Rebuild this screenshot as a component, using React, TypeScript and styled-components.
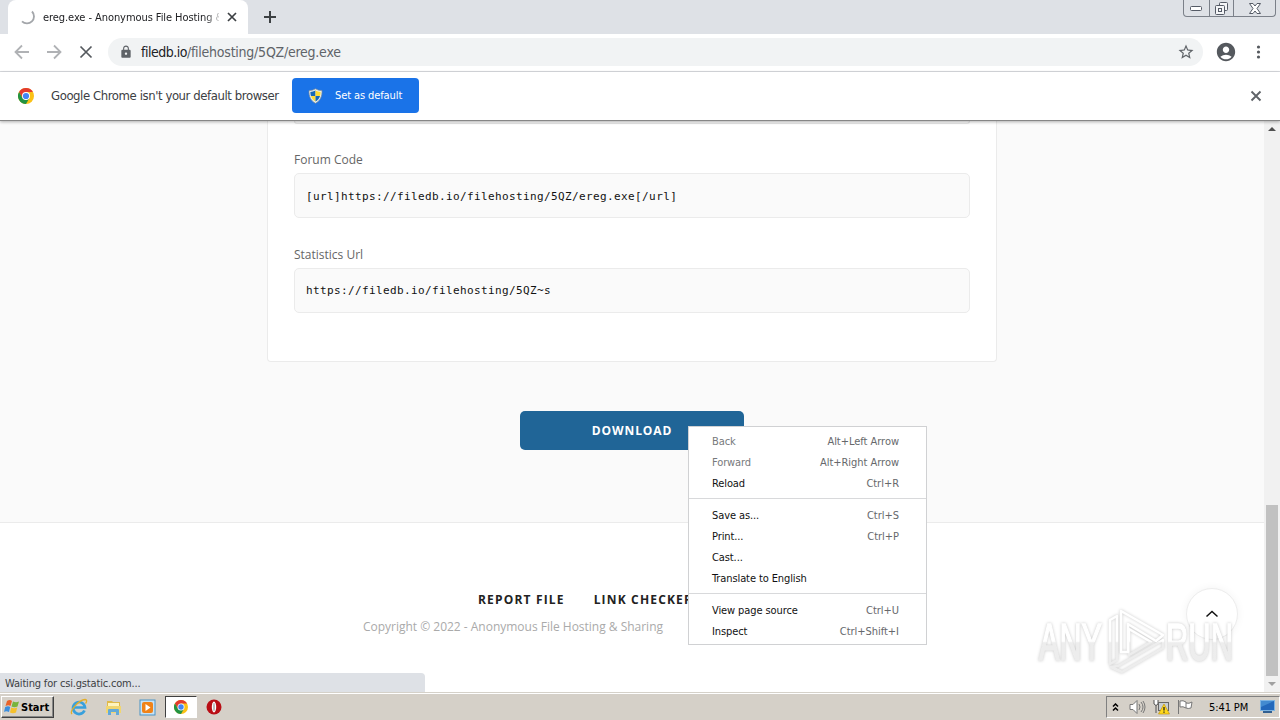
import React from 'react';
import styled, { createGlobalStyle, css } from 'styled-components';
import { MdAccountCircle, MdLock, MdStarBorder } from 'react-icons/md';

const GlobalStyle = createGlobalStyle`
  * {
    box-sizing: border-box;
  }
  body {
    margin: 0;
    overflow: hidden;
    background: #fafafa;
  }
`;

const uiFont = css`
  font-family: 'DejaVu Sans Condensed', 'DejaVu Sans', sans-serif;
  font-stretch: condensed;
`;

const Screen = styled.div`
  ${uiFont}
  position: relative;
  width: 1280px;
  height: 720px;
  display: flex;
  flex-direction: column;
  overflow: hidden;
  font-size: 11px;
  color: #202124;
`;

const Label = styled.span<{ $space?: number; $color?: string }>`
  white-space: nowrap;
  letter-spacing: ${(p) => p.$space || 0}px;
  ${(p) => p.$color && `color: ${p.$color};`}
`;

/* ---------- tab strip ---------- */

const TabStrip = styled.div`
  flex: none;
  height: 34px;
  display: flex;
  align-items: flex-start;
  padding-left: 8px;
  background: #dee1e6;
`;

const Tab = styled.div`
  width: 240px;
  height: 34px;
  display: flex;
  align-items: center;
  padding-left: 12px;
  background: #fff;
  border-radius: 8px 8px 0 0;
`;

const TabTitle = styled.div`
  width: 176px;
  margin-left: 7px;
  overflow: hidden;
  mask-image: linear-gradient(to right, #000 162px, transparent 180px);
`;

const TabClose = styled.svg`
  margin-left: 8px;
`;

const NewTab = styled.svg`
  margin: 11px 0 0 16px;
`;

const WindowButtons = styled.div`
  display: flex;
  width: 93px;
  height: 17px;
  margin: 0 4px 0 auto;
  border: 1px solid #7b8089;
  border-top: none;
  border-radius: 0 0 4px 4px;
`;

const WindowButton = styled.div<{ $width: number }>`
  width: ${(p) => p.$width}px;
  display: flex;
  align-items: center;
  justify-content: center;
  & + & {
    border-left: 1px solid #7b8089;
  }
`;

/* ---------- toolbar ---------- */

const Toolbar = styled.div`
  flex: none;
  height: 38px;
  display: flex;
  align-items: center;
  padding: 0 14px 2px;
  background: #fff;
  border-bottom: 1px solid #dadce0;
`;

const NavIcon = styled.svg`
  flex: none;
  margin-right: 16px;
`;

const Omnibox = styled.div`
  flex: none;
  width: 1095px;
  height: 28px;
  margin-left: -2px;
  display: flex;
  align-items: center;
  padding: 0 8px 0 11px;
  border-radius: 14px;
  background: #f1f3f4;
  color: #5f6368;
`;

const Url = styled.div`
  flex: 1;
  margin-left: 8px;
  font-size: 14px;
  letter-spacing: -0.24px;
  color: #606469;
  b {
    font-weight: normal;
    letter-spacing: -0.5px;
    color: #202124;
  }
`;

/* ---------- info bar ---------- */

const InfoBar = styled.div`
  flex: none;
  height: 49px;
  display: flex;
  align-items: center;
  padding: 0 18px 1px;
  background: #fff;
  position: relative;
  border-bottom: 1px solid #868686;
  box-shadow: 0 1px 3px rgba(0, 0, 0, 0.3);
`;

const InfoText = styled.div`
  width: 228px;
  margin: 0 13px 0 17px;
  font-size: 13px;
  letter-spacing: -0.42px;
  white-space: nowrap;
  color: #3c4043;
`;

const DefaultButton = styled.div`
  width: 127px;
  height: 35px;
  display: flex;
  align-items: center;
  gap: 12px;
  padding-left: 16px;
  border-radius: 4px;
  background: #1a73e8;
  color: #fff;
`;

const InfoClose = styled.svg`
  margin: 1px 0 0 auto;
`;

/* ---------- page ---------- */

const Viewport = styled.div`
  flex: 1;
  min-height: 0;
  display: flex;
`;

const Page = styled.div`
  width: 1264px;
  display: flex;
  flex-direction: column;
  align-items: center;
  overflow: hidden;
  background: #fafafa;
  font-family: 'Open Sans', sans-serif;
  font-stretch: normal;
`;

const Card = styled.div`
  flex: none;
  width: 730px;
  height: 241px;
  padding: 0 26px;
  border: 1px solid #ebebeb;
  border-top: none;
  border-radius: 0 0 4px 4px;
  background: #fff;
`;

const PreviousField = styled.div`
  height: 3px;
  border: 1px solid #e6e6e6;
  border-top: none;
  border-radius: 0 0 5px 5px;
  background: #fafafa;
`;

const FieldLabel = styled.div<{ $top: number }>`
  height: 18px;
  margin-top: ${(p) => p.$top}px;
  font-size: 12px;
  line-height: 18px;
  color: #666;
`;

const CodeField = styled.div<{ $line: number }>`
  height: 45px;
  margin-top: 4px;
  padding-left: 11px;
  border: 1px solid #ebebeb;
  border-radius: 5px;
  background: #fafafa;
  font-family: 'DejaVu Sans Mono', monospace;
  font-size: 11px;
  letter-spacing: 0.38px;
  line-height: ${(p) => p.$line}px;
  color: #111;
`;

const Download = styled.div`
  flex: none;
  width: 224px;
  height: 39px;
  margin-top: 49px;
  border-radius: 5px;
  background: #206597;
  color: #fff;
  font-size: 12px;
  font-weight: 700;
  letter-spacing: 0.9px;
  line-height: 39px;
  text-align: center;
`;

const Footer = styled.div`
  flex: none;
  width: 100%;
  height: 171px;
  margin-top: 72px;
  padding-top: 67px;
  border-top: 1px solid #ebebeb;
  background: #fff;
`;

const FooterLinks = styled.div`
  display: flex;
  gap: 29px;
  padding-left: 478px;
  font-size: 12px;
  font-weight: 700;
  letter-spacing: 1.17px;
  line-height: 20px;
  color: #222;
`;

const Copyright = styled.div`
  margin-top: 8px;
  padding-left: 363px;
  font-size: 12px;
  letter-spacing: -0.01px;
  line-height: 18px;
  color: #aaa;
`;

const Scrollbar = styled.div`
  width: 16px;
  display: flex;
  flex-direction: column;
  align-items: center;
  padding: 6px 0;
  background: #f1f1f1;
`;

const Thumb = styled.div`
  width: 12px;
  height: 171px;
  margin: auto 0 6px;
  background: #c1c1c1;
`;

const Arrow = styled.div<{ $down?: boolean }>`
  border: 4px solid transparent;
  ${(p) =>
    p.$down
      ? 'border-top-color: #a0a0a0; border-bottom: 0;'
      : 'border-bottom-color: #505050; border-top: 0;'}
`;

/* ---------- overlays ---------- */

const StatusBubble = styled.div`
  position: absolute;
  left: 0;
  bottom: 28px;
  width: 425px;
  height: 19px;
  padding-left: 5px;
  border-top-right-radius: 4px;
  background: #dee1e6;
  line-height: 21px;
  color: #3c4043;
`;

const ContextMenu = styled.div`
  position: absolute;
  left: 688px;
  top: 426px;
  width: 239px;
  height: 219px;
  padding-top: 4px;
  border: 1px solid #d0d1d3;
  background: #fff;
`;

const MenuRow = styled.div<{ $disabled?: boolean }>`
  height: 21px;
  display: flex;
  justify-content: space-between;
  padding: 0 27px 0 23px;
  line-height: 21px;
  color: ${(p) => (p.$disabled ? '#77797c' : '#111')};
`;

const MenuLine = styled.div`
  height: 1px;
  margin: 4px 0 6px;
  background: #d8d9db;
`;

const ToTop = styled.div`
  position: absolute;
  left: 1186px;
  top: 588px;
  width: 52px;
  height: 52px;
  display: flex;
  align-items: center;
  justify-content: center;
  border: 1px solid #ededed;
  border-radius: 50%;
  background: #fff;
  box-shadow: 0 0 8px rgba(0, 0, 0, 0.05);
`;

const Watermark = styled.svg`
  position: absolute;
  left: 1030px;
  top: 602px;
  filter: drop-shadow(0 0 1.5px rgba(0, 0, 0, 0.22));
`;

/* ---------- taskbar ---------- */

const Taskbar = styled.div`
  flex: none;
  height: 28px;
  display: flex;
  align-items: center;
  padding: 1px 0 0 1px;
  border-top: 1px solid #d5d1c9;
  box-shadow: inset 0 1px 0 #fff;
  background: #d5d0c8;
  color: #000;
`;

const StartButton = styled.div`
  width: 53px;
  height: 22px;
  display: flex;
  align-items: center;
  gap: 1px;
  padding-left: 2px;
  border: 1px solid;
  border-color: #fff #404040 #404040 #fff;
  box-shadow: inset -1px -1px 0 #888;
  font-size: 11px;
  font-weight: 700;
`;

const TaskIcons = styled.div`
  display: flex;
  align-items: center;
  margin-left: 8px;
`;

const TaskIcon = styled.div<{ $active?: boolean }>`
  width: ${(p) => (p.$active ? 32 : 34)}px;
  height: 22px;
  display: flex;
  align-items: center;
  justify-content: center;
  ${(p) =>
    p.$active &&
    `
    margin: 0 0 0 1px;
    border: 1px solid;
    border-color: #404040 #fff #fff #404040;
    background: #fff;
  `}
`;

const Tray = styled.div`
  width: 174px;
  height: 22px;
  display: flex;
  align-items: center;
  margin-left: auto;
  padding-left: 5px;
  border: 1px solid;
  border-color: #808080 #fff #fff #808080;
`;

const TraySvg = styled.svg<{ $left: number }>`
  flex: none;
  margin-left: ${(p) => p.$left}px;
`;

const Clock = styled.div`
  flex: none;
  width: 40px;
  margin: 0 11px 0 15px;
  font-size: 11px;
  letter-spacing: -0.1px;
  white-space: nowrap;
`;

function ChromeLogo({ size }: { size: number }) {
  return (
    <svg width={size} height={size} viewBox="0 0 16 16">
      <circle cx="8" cy="8" r="8" fill="#fbc116" />
      <path d="M8 4h6.930A8 8 0 0 0 1.070 4L4.500 10Z" fill="#e33b2e" />
      <path d="M1.070 4A8 8 0 0 0 8 16l3.460-6L8 11.500 4.500 10Z" fill="#229342" />
      <circle cx="8" cy="8" r="4" fill="#fff" />
      <circle cx="8" cy="8" r="3.100" fill="#4285f4" />
    </svg>
  );
}

function Shield() {
  return (
    <svg width="15" height="16" viewBox="0 0 15 16">
      <path
        d="M7.500.8Q10.500 2.800 14 2.500C14.300 8.500 12 13 7.500 15.300 3 13 .7 8.500 1 2.500Q4.500 2.800 7.500.8Z"
        fill="#e8eef0"
        stroke="#7b8b98"
        strokeWidth=".7"
      />
      <path d="M7.500 2.600V8H3C2.500 6.500 2.400 5.500 2.400 4Q5 4 7.500 2.600Z" fill="#1668b8" />
      <path d="M7.500 2.600V8H12c.5-1.500.6-2.500.6-4Q10 4 7.500 2.600Z" fill="#ffdc35" />
      <path d="M7.500 8v5.600C5.200 12.200 3.700 10.500 3 8Z" fill="#ffdc35" />
      <path d="M7.500 8v5.600C9.800 12.200 11.300 10.500 12 8Z" fill="#1668b8" />
    </svg>
  );
}

function BrowserTop() {
  return (
    <>
      <TabStrip>
        <Tab>
          <svg width="16" height="16" viewBox="0 0 16 16" fill="none">
            <path d="M12 2.500A7 7 0 1 1 2 12.300" stroke="#a3a6aa" strokeWidth="1.800" />
          </svg>
          <TabTitle>
            <Label $space={-0.07}>ereg.exe - Anonymous File Hosting &amp; Sharing</Label>
          </TabTitle>
          <TabClose width="10" height="10">
            <path d="m1 1 8 8M9 1 1 9" stroke="#3c4043" strokeWidth="1.700" />
          </TabClose>
        </Tab>
        <NewTab width="12" height="12">
          <path d="M6 0v12M0 6h12" stroke="#3c4043" strokeWidth="2" />
        </NewTab>
        <WindowButtons>
          <WindowButton $width={25}>
            <svg width="12" height="5">
              <rect x=".5" y=".5" width="11" height="4" rx="1" fill="#fff" stroke="#555b66" />
            </svg>
          </WindowButton>
          <WindowButton $width={25}>
            <svg width="13" height="13" fill="#f4f5f7" stroke="#555b66">
              <rect x="4.500" y=".5" width="8" height="8" rx="1" />
              <rect x=".5" y="3.500" width="9" height="9" rx="1" />
              <rect x="3.500" y="6.500" width="3" height="3" />
            </svg>
          </WindowButton>
          <WindowButton $width={42}>
            <svg width="12" height="11">
              <path
                d="M.5.500h3.500L6 3 8 .500h3.500L8 5.500l3.500 5H8L6 8l-2 2.500H.5l3.500-5Z"
                fill="#fff"
                stroke="#555b66"
              />
            </svg>
          </WindowButton>
        </WindowButtons>
      </TabStrip>
      <Toolbar>
        <NavIcon width="16" height="16" fill="none" stroke="#b0b2b5" strokeWidth="1.800">
          <path d="M15 8H2M8 1.500 1.500 8 8 14.500" />
        </NavIcon>
        <NavIcon width="16" height="16" fill="none" stroke="#b0b2b5" strokeWidth="1.800">
          <path d="M1 8h13M8 1.500 14.500 8 8 14.500" />
        </NavIcon>
        <NavIcon width="16" height="16" fill="none" stroke="#55595e" strokeWidth="1.700">
          <path d="m2.500 2.500 11 11M13.500 2.500l-11 11" />
        </NavIcon>
        <Omnibox>
          <MdLock size={14} />
          <Url>
            <b>filedb.io</b>/filehosting/5QZ/ereg.exe
          </Url>
          <MdStarBorder size={18} />
        </Omnibox>
        <svg width="63" height="22" viewBox="0 0 63 22">
          <g transform="translate(12 0)" color="#55595e">
            <MdAccountCircle size={22} />
          </g>
          <g fill="#55595e">
            <circle cx="55.500" cy="6" r="1.600" />
            <circle cx="55.500" cy="11" r="1.600" />
            <circle cx="55.500" cy="16" r="1.600" />
          </g>
        </svg>
      </Toolbar>
      <InfoBar>
        <ChromeLogo size={16} />
        <InfoText>Google Chrome isn't your default browser</InfoText>
        <DefaultButton>
          <Shield />
          <Label $space={-0.1}>Set as default</Label>
        </DefaultButton>
        <InfoClose width="12" height="12">
          <path d="m1.500 1.500 9 9M10.500 1.500l-9 9" stroke="#5f6368" strokeWidth="1.900" />
        </InfoClose>
      </InfoBar>
    </>
  );
}

const menu = [
  [
    { name: 'Back', keys: 'Alt+Left Arrow', disabled: true },
    { name: 'Forward', keys: 'Alt+Right Arrow', disabled: true },
    { name: 'Reload', keys: 'Ctrl+R' },
  ],
  [
    { name: 'Save as...', keys: 'Ctrl+S' },
    { name: 'Print...', keys: 'Ctrl+P' },
    { name: 'Cast...', keys: '' },
    { name: 'Translate to English', keys: '' },
  ],
  [
    { name: 'View page source', keys: 'Ctrl+U' },
    { name: 'Inspect', keys: 'Ctrl+Shift+I' },
  ],
];

function PageMenu() {
  return (
    <ContextMenu>
      {menu.map((group, i) => (
        <React.Fragment key={i}>
          {i > 0 && <MenuLine />}
          {group.map((item) => (
            <MenuRow key={item.name} $disabled={'disabled' in item}>
              <Label $space={-0.1}>{item.name}</Label>
              <Label $space={-0.03} $color="#66686b">
                {item.keys}
              </Label>
            </MenuRow>
          ))}
        </React.Fragment>
      ))}
    </ContextMenu>
  );
}

function AnyRun() {
  return (
    <Watermark width="230" height="80" viewBox="0 0 230 80">
      <defs>
        <linearGradient id="fade" gradientUnits="userSpaceOnUse" x1="0" y1="20" x2="0" y2="60">
          <stop offset=".48" stopColor="#fff" />
          <stop offset=".52" stopColor="#ededed" />
        </linearGradient>
      </defs>
      <g
        fill="url(#fade)"
        stroke="url(#fade)"
        fontFamily="Liberation Sans, sans-serif"
        fontSize="52"
        strokeWidth="1.500"
      >
        <text x="9" y="58" textLength="63" lengthAdjust="spacingAndGlyphs">
          ANY
        </text>
        <text x="136" y="58" textLength="67" lengthAdjust="spacingAndGlyphs">
          RUN
        </text>
      </g>
      <g fill="none" stroke="url(#fade)" strokeWidth="2.500" strokeLinejoin="round">
        <path d="M87 14 80 18v44l7-4Z" />
        <path d="m133 38-45 26-7 1 11 5 41-24Z" />
        <path d="M99 27v26l22-13Z" />
        <path d="M91 50V9l42 24-7 6-28-17v28Z" stroke="#fff" />
      </g>
    </Watermark>
  );
}

function WindowsTaskbar() {
  return (
    <Taskbar>
      <StartButton>
        <svg width="16" height="16" viewBox="0 0 16 16">
          <path d="M3 2q3-2 5 0L6.500 7q-2-1.500-5 0Z" fill="#e9632a" />
          <path d="M9 2.500q3 1.500 6 0L13.500 7.500q-3 1.500-6 0Z" fill="#78b43c" />
          <path d="M1.200 8q3-1.500 5 0L5 13q-3-1.500-5 0Z" fill="#3b8ede" />
          <path d="M7.200 8.500q3 1.500 6 0L12 13.500q-3 1.500-6 0Z" fill="#f5c02c" />
        </svg>
        <Label>Start</Label>
      </StartButton>
      <TaskIcons>
        <TaskIcon>
          <svg width="18" height="18" viewBox="0 0 18 18" fill="none">
            <path d="M14.500 12.500A6 6 0 1 1 15 9.500H4" stroke="#38a0dc" strokeWidth="2.700" />
            <path d="M2 16C-1 13 9 2 15 1.500c3 0 1 3.500.5 4" stroke="#e3ae28" strokeWidth="1.300" />
          </svg>
        </TaskIcon>
        <TaskIcon>
          <svg width="17" height="17" viewBox="0 0 17 17">
            <path d="M2 2h5l1 1h7v9H2Z" fill="#e0b94a" />
            <path d="M3 4h11v5H3Z" fill="#fff4bd" />
            <path d="M1 7h15v7H1Z" fill="#f1d670" />
            <path d="M3 16v-5q0-1 1-1h9q1 0 1 1v5h-3v-3H6v3Z" fill="#62a9d8" />
          </svg>
        </TaskIcon>
        <TaskIcon>
          <svg width="17" height="17" viewBox="0 0 17 17">
            <rect x="1" y="1" width="15" height="15" fill="#c8e3f5" stroke="#4a93c5" />
            <rect x="3" y="3" width="11" height="11" rx="2" fill="#f08318" />
            <path d="m6.500 5 5 3.500-5 3.500Z" fill="#fff" />
          </svg>
        </TaskIcon>
        <TaskIcon $active>
          <ChromeLogo size={14} />
        </TaskIcon>
        <TaskIcon>
          <svg width="16" height="16" viewBox="0 0 16 16">
            <circle cx="8" cy="8" r="7.500" fill="#b90e15" />
            <ellipse cx="8" cy="8" rx="2.200" ry="5.400" fill="#fff" />
            <ellipse cx="8" cy="8" rx="1" ry="4.300" fill="#bbb" />
          </svg>
        </TaskIcon>
      </TaskIcons>
      <Tray>
        <TraySvg $left={0} width="7" height="9" fill="none" stroke="#000" strokeWidth="1.500">
          <path d="m1 3.500 2.500-2.500L6 3.500M1 7.500 3.500 5 6 7.500" />
        </TraySvg>
        <TraySvg $left={10} width="17" height="16" viewBox="0 0 17 16" fill="none" stroke="#777">
          <path d="M1 5.500h3l4-4v13l-4-4H1Z" fill="#fff" />
          <path d="M10 5q2 3 0 6M12 3q4 5 0 10M14 2q4 6 0 12" />
        </TraySvg>
        <TraySvg $left={7} width="17" height="16" viewBox="0 0 17 16">
          <path d="M1 1v4q2 3 4 0V1M3 6v8" fill="#fff" stroke="#555" />
          <rect x="5.500" y="3.500" width="10" height="8" fill="#c7cdd2" stroke="#666" />
          <path d="m11 5 5.500 10h-11Z" fill="#ffd91c" stroke="#bd8b00" strokeWidth=".6" />
          <path d="M11 8v3.500M11 12.500v1.300" stroke="#222" strokeWidth="1.300" />
        </TraySvg>
        <TraySvg $left={7} width="17" height="16" viewBox="0 0 17 16" fill="#fff" stroke="#777">
          <path d="M1.500 1v14M3 2q3-1 6 1v6q-3-2-6-1ZM9 4q3 1 6-1l-1 6q-3 1-5 0" />
        </TraySvg>
        <Clock>5:41 PM</Clock>
        <svg width="15" height="14" viewBox="0 0 15 14">
          <rect x=".5" y=".5" width="14" height="10" fill="#2368bb" stroke="#7eb4e2" />
          <path d="M1 1h13L1 7Z" fill="#438bd0" />
          <path d="M3 12h9" stroke="#315f91" strokeWidth="2" />
        </svg>
      </Tray>
    </Taskbar>
  );
}

function App() {
  return (
    <>
      <GlobalStyle />
      <Screen>
        <BrowserTop />
        <Viewport>
          <Page>
            <Card>
              <PreviousField />
              <FieldLabel $top={27}>Forum Code</FieldLabel>
              <CodeField $line={45}>[url]https://filedb.io/filehosting/5QZ/ereg.exe[/url]</CodeField>
              <FieldLabel $top={28}>Statistics Url</FieldLabel>
              <CodeField $line={43}>https://filedb.io/filehosting/5QZ~s</CodeField>
            </Card>
            <Download>DOWNLOAD</Download>
            <Footer>
              <FooterLinks>
                <span>REPORT FILE</span>
                <span>LINK CHECKER</span>
              </FooterLinks>
              <Copyright>Copyright © 2022 - Anonymous File Hosting &amp; Sharing</Copyright>
            </Footer>
          </Page>
          <Scrollbar>
            <Arrow />
            <Thumb />
            <Arrow $down />
          </Scrollbar>
        </Viewport>
        <WindowsTaskbar />
        <StatusBubble>
          <Label $space={-0.17}>Waiting for csi.gstatic.com...</Label>
        </StatusBubble>
        <ToTop>
          <svg width="14" height="8" fill="none" stroke="#111" strokeWidth="1.500">
            <path d="m1.500 6.500 5.500-5 5.500 5" />
          </svg>
        </ToTop>
        <AnyRun />
        <PageMenu />
      </Screen>
    </>
  );
}

export default App;
